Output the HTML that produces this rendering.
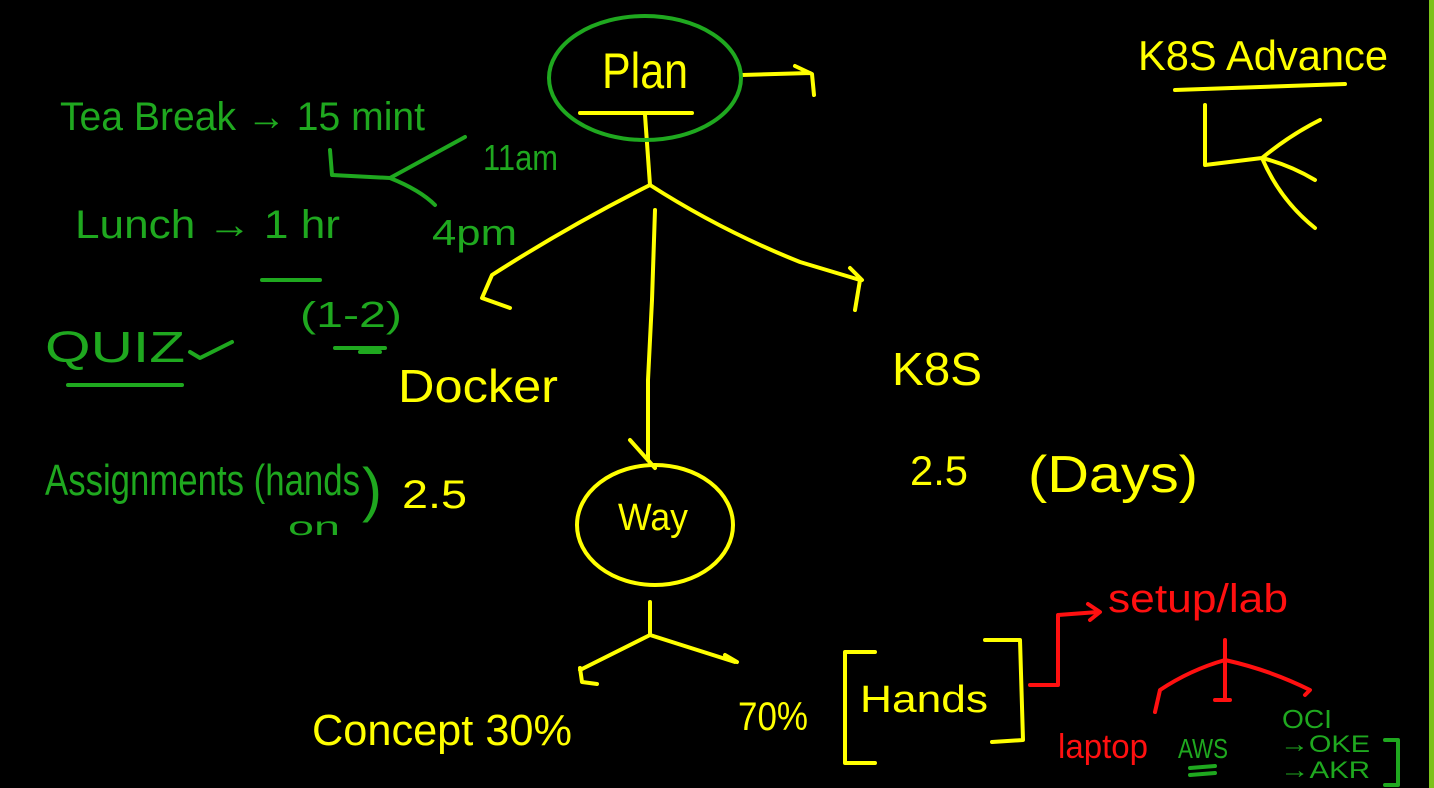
<!DOCTYPE html>
<html><head><meta charset="utf-8"><style>
html,body{margin:0;padding:0;background:#000;width:1434px;height:788px;overflow:hidden}
svg{display:block}
text{font-family:"Liberation Sans Narrow","Liberation Sans",sans-serif}
</style></head><body>
<svg width="1434" height="788" viewBox="0 0 1434 788">
<rect width="1434" height="788" fill="#000"/>
<rect x="1429" y="0" width="5" height="788" fill="#7cc21a"/>
<g fill="none" stroke-width="4" stroke-linecap="round" stroke-linejoin="round">
<g stroke="#ffff00">
<path d="M580 113 L692 113"/>
<path d="M645 115 L650 185"/>
<path d="M742 75 L810 73 M795 66 L812 74 L814 95"/>
<path d="M650 185 Q570 225 492 275 L482 298 L510 308"/>
<path d="M650 185 Q720 230 800 262 L860 280 L855 310 M850 268 L862 280"/>
<path d="M655 210 L652 300 L648 380 L648 460"/>
<path d="M630 440 L655 468"/>
<ellipse cx="655" cy="525" rx="78" ry="60"/>
<path d="M650 602 L650 635 L580 670 M650 635 L735 662 M580 668 L582 682 L597 684 M725 655 L737 662"/>
<path d="M875 652 L845 652 L845 763 L875 763"/>
<path d="M985 640 L1020 640 L1023 740 L992 742"/>
<path d="M1175 90 L1345 84"/>
<path d="M1205 105 L1205 165 L1262 158 Q1290 135 1320 120 M1262 158 Q1290 165 1315 180 M1262 158 Q1280 200 1315 228"/>
</g>
<g stroke="#1fa81f">
<ellipse cx="645" cy="78" rx="96" ry="62"/>
<path d="M330 150 L332 175 L390 178 L465 137 M390 178 Q420 190 435 205"/>
<path d="M262 280 L320 280"/>
<path d="M335 348 L385 348 M360 352 L380 352"/>
<path d="M68 385 L182 385"/>
<path d="M190 352 L200 358 L232 342"/>
<path d="M1385 740 L1398 740 L1398 785 L1385 785"/>
<path d="M1190 768 L1215 766 M1190 775 L1215 773"/>
</g>
<g stroke="#ff1010">
<path d="M1030 685 L1058 685 L1058 615 L1098 612 M1088 604 L1100 612 L1090 620"/>
<path d="M1225 640 L1225 700 M1215 700 L1230 700 M1225 660 Q1190 670 1160 690 L1155 712 M1225 660 Q1270 670 1310 690 L1305 695"/>
</g>
</g>
<g fill="#ffff00">
<text x="602" y="88" font-size="50" textLength="86" lengthAdjust="spacingAndGlyphs">Plan</text>
<text x="398" y="402" font-size="46" textLength="160" lengthAdjust="spacingAndGlyphs">Docker</text>
<text x="892" y="385" font-size="46" textLength="90" lengthAdjust="spacingAndGlyphs">K8S</text>
<text x="910" y="485" font-size="42" textLength="58" lengthAdjust="spacingAndGlyphs">2.5</text>
<text x="1028" y="492" font-size="52" textLength="170" lengthAdjust="spacingAndGlyphs">(Days)</text>
<text x="618" y="530" font-size="38" textLength="70" lengthAdjust="spacingAndGlyphs">Way</text>
<text x="312" y="745" font-size="44" textLength="260" lengthAdjust="spacingAndGlyphs">Concept 30%</text>
<text x="738" y="730" font-size="40" textLength="70" lengthAdjust="spacingAndGlyphs">70%</text>
<text x="860" y="712" font-size="38" textLength="128" lengthAdjust="spacingAndGlyphs">Hands</text>
<text x="402" y="508" font-size="40" textLength="65" lengthAdjust="spacingAndGlyphs">2.5</text>
<text x="1138" y="70" font-size="42" textLength="250" lengthAdjust="spacingAndGlyphs">K8S  Advance</text>
</g>
<g fill="#1fa81f">
<text x="60" y="130" font-size="40" textLength="365" lengthAdjust="spacingAndGlyphs">Tea Break → 15 mint</text>
<text x="483" y="170" font-size="36" textLength="75" lengthAdjust="spacingAndGlyphs">11am</text>
<text x="432" y="245" font-size="36" textLength="85" lengthAdjust="spacingAndGlyphs">4pm</text>
<text x="75" y="238" font-size="40" textLength="265" lengthAdjust="spacingAndGlyphs">Lunch → 1 hr</text>
<text x="300" y="327" font-size="36" textLength="102" lengthAdjust="spacingAndGlyphs">(1-2)</text>
<text x="45" y="362" font-size="44" textLength="140" lengthAdjust="spacingAndGlyphs">QUIZ</text>
<text x="45" y="495" font-size="44" textLength="315" lengthAdjust="spacingAndGlyphs">Assignments (hands</text>
<text x="288" y="535" font-size="26" textLength="52" lengthAdjust="spacingAndGlyphs">on</text>
<text x="362" y="510" font-size="60">)</text>
<text x="1178" y="758" font-size="28" textLength="50" lengthAdjust="spacingAndGlyphs">AWS</text>
<text x="1282" y="728" font-size="26" textLength="50" lengthAdjust="spacingAndGlyphs">OCI</text>
<text x="1280" y="752" font-size="24" textLength="90" lengthAdjust="spacingAndGlyphs">→OKE</text>
<text x="1280" y="778" font-size="24" textLength="90" lengthAdjust="spacingAndGlyphs">→AKR</text>
</g>
<g fill="#ff1010">
<text x="1108" y="612" font-size="40" textLength="180" lengthAdjust="spacingAndGlyphs">setup/lab</text>
<text x="1058" y="758" font-size="34" textLength="90" lengthAdjust="spacingAndGlyphs">laptop</text>
</g>
</svg>
</body></html>
